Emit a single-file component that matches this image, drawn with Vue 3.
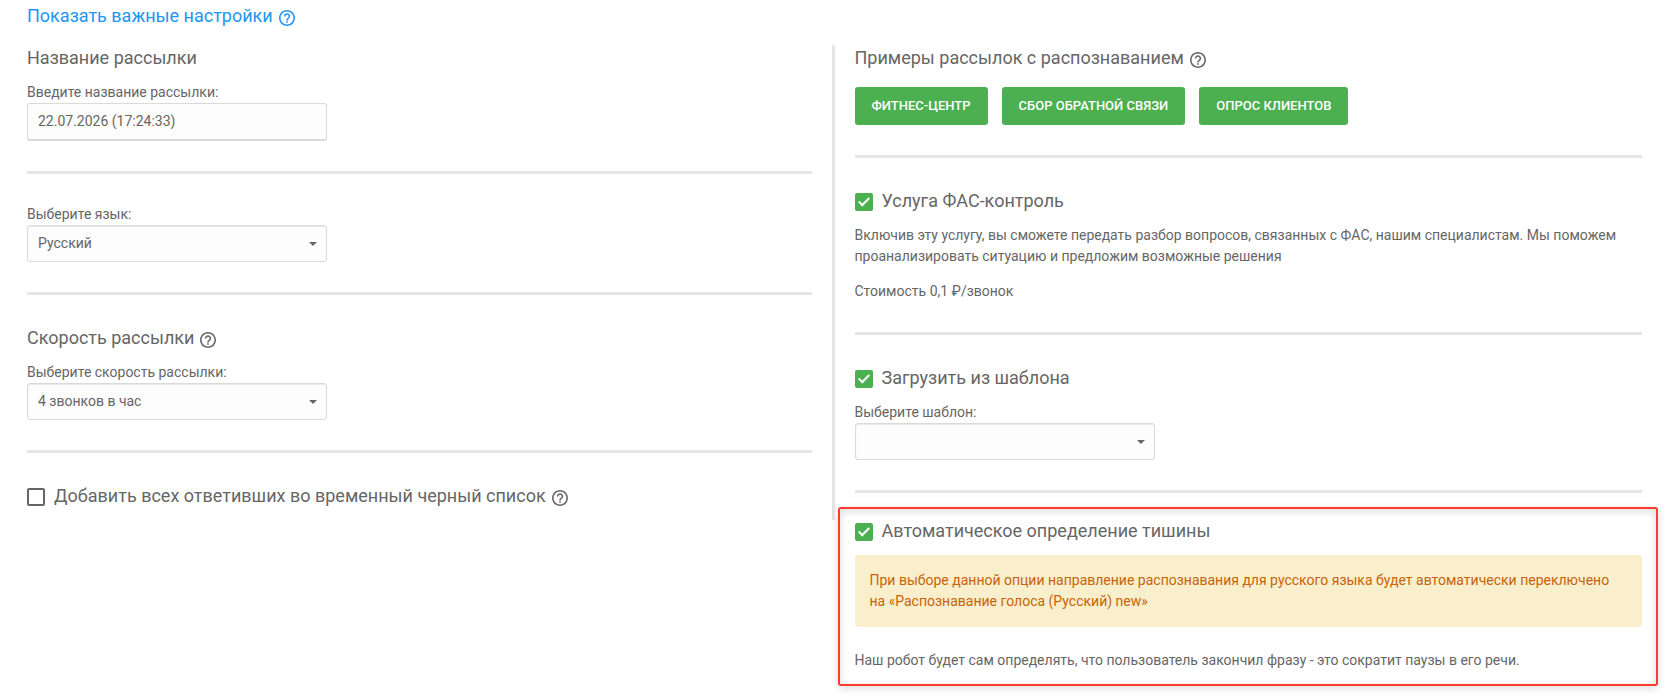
<template>
  <main class="settings">
    <a href="#" class="settings__toggle" @click.prevent>Показать важные настройки<svg class="help" viewBox="2 2 20 20" aria-hidden="true"><path :d="helpPath" /></svg></a>

    <div class="settings__columns">
      <div class="column column--left">
        <section class="section">
          <h2 class="title">Название рассылки</h2>
          <label class="label" for="mailing-name">Введите название рассылки:</label>
          <input id="mailing-name" v-model="form.name" class="input" type="text" />
        </section>

        <section class="section">
          <label class="label" for="mailing-language">Выберите язык:</label>
          <div class="select">
            <select id="mailing-language" v-model="form.language" class="select__control">
              <option v-for="item in languages" :key="item">{{ item }}</option>
            </select>
          </div>
        </section>

        <section class="section">
          <h2 class="title">Скорость рассылки<svg class="help" viewBox="2 2 20 20" aria-hidden="true"><path :d="helpPath" /></svg></h2>
          <label class="label" for="mailing-speed">Выберите скорость рассылки:</label>
          <div class="select">
            <select id="mailing-speed" v-model="form.speed" class="select__control">
              <option v-for="item in speeds" :key="item">{{ item }}</option>
            </select>
          </div>
        </section>

        <section class="section">
          <label class="title check">
            <input v-model="form.blacklist" class="check__box" type="checkbox" />
            <span>Добавить всех ответивших во временный черный список<svg class="help" viewBox="2 2 20 20" aria-hidden="true"><path :d="helpPath" /></svg></span>
          </label>
        </section>
      </div>

      <div class="column column--right">
        <section class="section">
          <h2 class="title">Примеры рассылок с распознаванием<svg class="help" viewBox="2 2 20 20" aria-hidden="true"><path :d="helpPath" /></svg></h2>
          <div class="buttons">
            <button v-for="item in examples" :key="item" class="button" type="button">{{ item }}</button>
          </div>
        </section>

        <section class="section">
          <label class="title check">
            <input v-model="form.control" class="check__box" type="checkbox" />
            <span>Услуга ФАС-контроль</span>
          </label>
          <p class="text">Включив эту услугу, вы сможете передать разбор вопросов, связанных с ФАС, нашим специалистам. Мы поможем проанализировать ситуацию и предложим возможные решения</p>
          <p class="text">Стоимость 0,1 ₽/звонок</p>
        </section>

        <section class="section">
          <label class="title check">
            <input v-model="form.useTemplate" class="check__box" type="checkbox" />
            <span>Загрузить из шаблона</span>
          </label>
          <label class="label" for="mailing-template">Выберите шаблон:</label>
          <div class="select">
            <select id="mailing-template" v-model="form.template" class="select__control">
              <option value=""></option>
            </select>
          </div>
        </section>

        <section class="highlight">
          <label class="title check">
            <input v-model="form.silence" class="check__box" type="checkbox" />
            <span>Автоматическое определение тишины</span>
          </label>
          <div class="alert">При выборе данной опции направление распознавания для русского языка будет автоматически переключено на «Распознавание голоса (Русский) new»</div>
          <p class="text">Наш робот будет сам определять, что пользователь закончил фразу - это сократит паузы в его речи.</p>
        </section>
      </div>
    </div>
  </main>
</template>

<script setup>
import { reactive } from 'vue'

const helpPath = 'M11 18h2v-2h-2v2zm1-16C6.48 2 2 6.48 2 12s4.48 10 10 10 10-4.48 10-10S17.52 2 12 2zm0 18c-4.41 0-8-3.59-8-8s3.59-8 8-8 8 3.59 8 8-3.59 8-8 8zm0-14c-2.21 0-4 1.79-4 4h2c0-1.1.9-2 2-2s2 .9 2 2c0 2-3 1.75-3 5h2c0-2.25 3-2.5 3-5 0-2.21-1.79-4-4-4z'

const languages = ['Русский']
const speeds = ['4 звонков в час']
const examples = ['Фитнес-центр', 'Сбор обратной связи', 'Опрос клиентов']

const form = reactive({
  name: '22.07.2026 (17:24:33)',
  language: 'Русский',
  speed: '4 звонков в час',
  template: '',
  blacklist: false,
  control: true,
  useTemplate: true,
  silence: true
})
</script>

<style>
body {
  background: #fff;
}
</style>

<style scoped>
.settings {
  box-sizing: border-box;
  padding: 2px 26px 14px 27px;
  font-family: Roboto, "Liberation Sans", sans-serif;
  font-size: 14px;
  line-height: 21px;
  color: #666;
}

.settings__toggle {
  display: block;
  width: fit-content;
  margin-bottom: 16px;
  font-size: 18px;
  line-height: 27px;
  color: #2196f3;
  text-decoration: none;
}

.settings__columns {
  display: grid;
  grid-template-columns: 1fr 1fr;
  align-items: start;
}

.column--left {
  padding: 0 20px 0 0;
  border-right: 3px solid #e5e5e5;
}

.column--right {
  padding-left: 20px;
}

.section + .section {
  padding-top: 30px;
}

.section:not(:last-child) {
  padding-bottom: 30px;
  border-bottom: 3px solid #e5e5e5;
}

.title {
  display: block;
  margin: 0;
  padding-bottom: 12px;
  font-size: 18px;
  font-weight: 400;
  line-height: 25px;
}

.help {
  width: 16px;
  height: 16px;
  margin-left: 6px;
  vertical-align: -4px;
  fill: currentColor;
}

.label {
  display: block;
  width: fit-content;
}

.input,
.select__control {
  display: block;
  box-sizing: border-box;
  width: 100%;
  height: 37px;
  padding: 0 10px;
  border: 1px solid #dadada;
  border-radius: 3px;
  background: #fdfdfd;
  font: inherit;
  color: inherit;
  outline: none;
}

.input {
  max-width: 300px;
  height: 38px;
  padding-bottom: 2px;
  border-bottom-width: 2px;
}

.select {
  position: relative;
  max-width: 300px;
}

.select__control {
  appearance: none;
  padding-right: 30px;
  box-shadow: inset 0 1px 1px rgba(0, 0, 0, 0.08);
}

.select::after {
  content: '';
  position: absolute;
  top: 17px;
  right: 10px;
  border: 4px solid transparent;
  border-top-color: #666;
  border-bottom: 0;
  pointer-events: none;
}

.check {
  display: flex;
  align-items: center;
  gap: 9px;
  width: fit-content;
  cursor: pointer;
}

.check__box {
  appearance: none;
  position: relative;
  flex: none;
  width: 18px;
  height: 18px;
  margin: 3px 0 0;
  border: 2px solid #666;
  border-radius: 2px;
}

.check__box:checked {
  border-color: #4caf50;
  background: #4caf50;
}

.check__box:checked::after {
  content: '';
  position: absolute;
  top: 0;
  left: 4px;
  width: 4px;
  height: 9px;
  border: solid #fff;
  border-width: 0 2px 2px 0;
  transform: rotate(45deg);
}

.buttons {
  display: flex;
  flex-wrap: wrap;
  gap: 14px;
  padding-top: 5px;
}

.button {
  height: 38px;
  padding: 0 17px 2px;
  border: 0;
  border-radius: 3px;
  background: #4caf50;
  font: inherit;
  font-size: 13px;
  font-weight: 500;
  text-transform: uppercase;
  color: #fff;
  cursor: pointer;
}

.text {
  margin: 0;
}

.text + .text {
  margin-top: 14px;
}

.highlight {
  margin: 14px -16px 0 -17px;
  padding: 9px 14px 13px 15px;
  border: 2px solid #ff3b30;
  border-radius: 3px;
  box-shadow: 0 2px 8px rgba(0, 0, 0, 0.14), inset 0 2px 8px rgba(0, 0, 0, 0.14);
}

.alert {
  margin-bottom: 23px;
  padding: 15px;
  border-radius: 3px;
  background: #faefcc;
  color: #c7630b;
}
</style>
